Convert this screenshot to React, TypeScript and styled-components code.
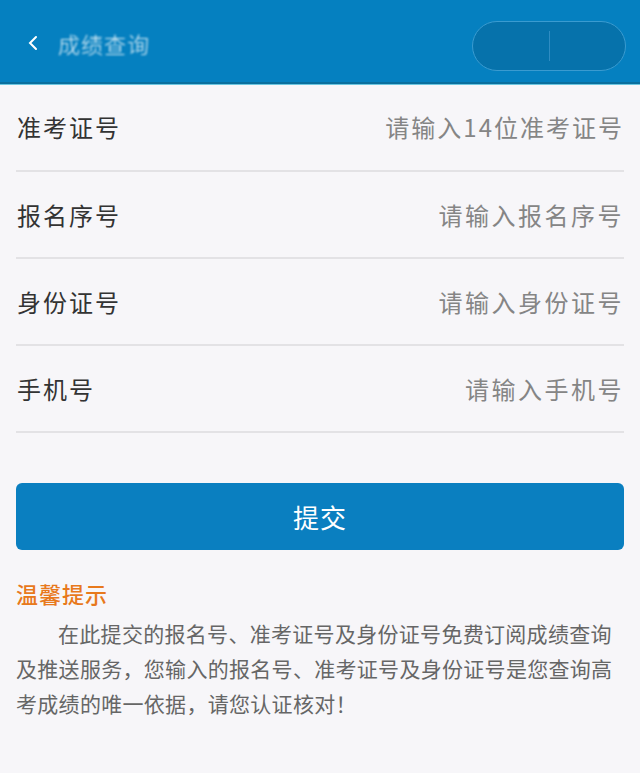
import * as React from "react";
import styled, { createGlobalStyle } from "styled-components";

const GlobalStyle = createGlobalStyle`
  html, body {
    margin: 0;
    padding: 0;
    background: #f7f6f9;
    font-family: "Noto Sans CJK SC", "Noto Sans", sans-serif;
  }
`;

interface IField {
  label: string;
  placeholder: string;
  compact?: boolean;
}

const fields: IField[] = [
  { label: "准考证号", placeholder: "请输入14位准考证号", compact: true },
  { label: "报名序号", placeholder: "请输入报名序号" },
  { label: "身份证号", placeholder: "请输入身份证号" },
  { label: "手机号", placeholder: "请输入手机号" },
];

const App: React.FunctionComponent = () => {
  return (
    <>
      <GlobalStyle />
      <Page>
        <Header>
          <TitleGroup>
            <svg width="14" height="18" viewBox="0 0 14 18">
              <path
                d="M10 3 L4 9 L10 15"
                fill="none"
                stroke="#ffffff"
                strokeWidth="2"
                strokeLinecap="round"
              />
            </svg>
            <Title>成绩查询</Title>
          </TitleGroup>
          <Capsule>
            <CapsuleHalf />
            <CapsuleDivider />
            <CapsuleHalf />
          </Capsule>
        </Header>
        <Form>
          {fields.map((f) => (
            <Row key={f.label}>
              <Label>{f.label}</Label>
              <Input placeholder={f.placeholder} $compact={f.compact} />
            </Row>
          ))}
        </Form>
        <Submit>提交</Submit>
        <Tips>
          <TipsTitle>温馨提示</TipsTitle>
          <TipsText>
            在此提交的报名号、准考证号及身份证号免费订阅成绩查询及推送服务，您输入的报名号、准考证号及身份证号是您查询高考成绩的唯一依据，请您认证核对！
          </TipsText>
        </Tips>
      </Page>
    </>
  );
};

export default App;

const Page = styled.div`
  width: 640px;
  min-height: 773px;
  background: #f7f6f9;
`;

const Header = styled.div`
  height: 82px;
  background: #0580c0;
  border-bottom: 2px solid #0a6f9e;
  box-shadow: 0 1px 0 #6cc6e0;
  display: flex;
  align-items: center;
  justify-content: space-between;
  padding: 0 14px 0 26px;
  box-sizing: content-box;
`;

const TitleGroup = styled.div`
  display: flex;
  align-items: center;
  gap: 18px;
  padding-top: 4px;
`;

const Title = styled.div`
  color: #ffffff;
  font-size: 22px;
  font-weight: 300;
  letter-spacing: 1px;
  filter: blur(1.2px);
  opacity: 0.9;
`;

const Capsule = styled.div`
  width: 152px;
  height: 48px;
  border-radius: 25px;
  background: #0672ab;
  border: 1px solid #3a9bd0;
  display: flex;
  align-items: center;
  margin-top: 10px;
`;

const CapsuleHalf = styled.div`
  flex: 1;
`;

const CapsuleDivider = styled.div`
  width: 1px;
  height: 30px;
  background: #2f8cc2;
`;

const Form = styled.div`
  padding: 0 16px;
`;

const Row = styled.div`
  height: 85px;
  display: flex;
  align-items: center;
  justify-content: space-between;
  border-bottom: 2px solid #e3e2e5;
  &:first-child {
    padding-bottom: 2px;
    box-sizing: content-box;
    height: 84px;
  }
`;

const Label = styled.div`
  font-size: 24px;
  letter-spacing: 2px;
  color: #333333;
  padding-left: 1px;
  white-space: nowrap;
`;

const Input = styled.input<{ $compact?: boolean }>`
  flex: 1;
  min-width: 0;
  border: none;
  outline: none;
  background: transparent;
  text-align: right;
  font-family: inherit;
  font-size: 24px;
  letter-spacing: ${(p) => (p.$compact ? "2px" : "2.5px")};
  color: #333333;
  padding: 0;
  &::placeholder {
    color: #858585;
  }
`;

const Submit = styled.button`
  display: block;
  margin: 50px 16px 0;
  width: 608px;
  height: 67px;
  border: none;
  border-radius: 6px;
  background: #0a7fc0;
  color: #ffffff;
  font-family: inherit;
  font-size: 26px;
  letter-spacing: 1px;
`;

const Tips = styled.div`
  padding: 28px 16px 0;
`;

const TipsTitle = styled.div`
  color: #e8791c;
  font-size: 22px;
  font-weight: 500;
  letter-spacing: 1px;
  line-height: 30px;
`;

const TipsText = styled.p`
  margin: 8px 0 0;
  color: #666666;
  font-size: 21px;
  line-height: 35px;
  letter-spacing: 0.3px;
  text-indent: 2em;
`;
